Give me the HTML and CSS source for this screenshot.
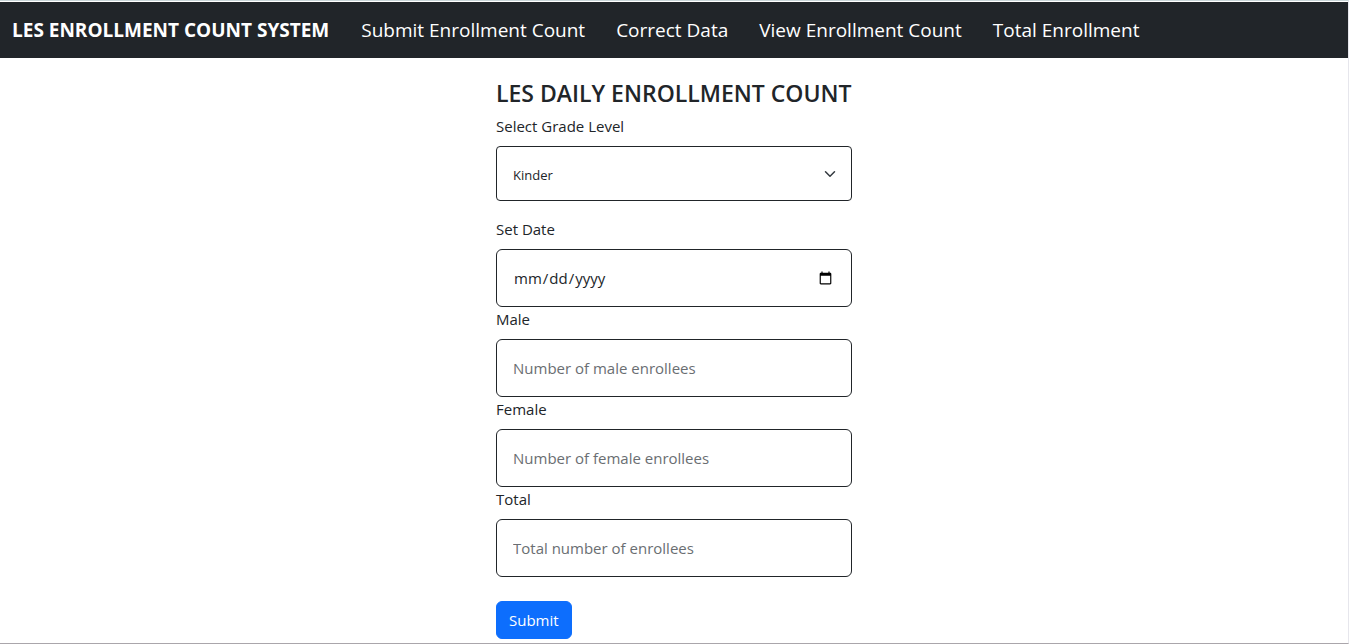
FILE: index.html
```html
<!DOCTYPE html>
<html lang="en">
<head>
  <meta charset="utf-8">
  <meta name="viewport" content="width=device-width, initial-scale=1">
  <title>LES Enrollment Count System</title>
  <link rel="stylesheet" href="styles.css">
</head>
<body class="page">
  <nav class="navbar">
    <a class="brand" href="#">LES ENROLLMENT COUNT SYSTEM</a>
    <div class="nav-links">
      <a class="nav-link" href="#">Submit Enrollment Count</a>
      <a class="nav-link" href="#">Correct Data</a>
      <a class="nav-link" href="#">View Enrollment Count</a>
      <a class="nav-link" href="#">Total Enrollment</a>
    </div>
  </nav>
  <main class="content">
    <form class="form">
      <h1 class="title">LES DAILY ENROLLMENT COUNT</h1>
      <div class="field field-spaced">
        <label class="label" for="grade">Select Grade Level</label>
        <div class="select-wrap">
          <select class="control select" id="grade">
            <option>Kinder</option>
            <option>Grade 1</option>
            <option>Grade 2</option>
            <option>Grade 3</option>
            <option>Grade 4</option>
            <option>Grade 5</option>
            <option>Grade 6</option>
          </select>
          <svg class="chevron" viewBox="0 0 16 16" aria-hidden="true"><path d="m2 5 6 6 6-6"/></svg>
        </div>
      </div>
      <div class="field">
        <label class="label" for="date">Set Date</label>
        <input class="control" id="date" type="date">
      </div>
      <div class="field">
        <label class="label" for="male">Male</label>
        <input class="control" id="male" type="text" placeholder="Number of male enrollees">
      </div>
      <div class="field">
        <label class="label" for="female">Female</label>
        <input class="control" id="female" type="text" placeholder="Number of female enrollees">
      </div>
      <div class="field">
        <label class="label" for="total">Total</label>
        <input class="control" id="total" type="text" placeholder="Total number of enrollees">
      </div>
      <button class="submit" type="submit">Submit</button>
    </form>
  </main>
</body>
</html>
```
FILE: styles.css
```css
*,
*::before,
*::after {
  box-sizing: border-box;
}

.page {
  margin: 0;
  min-height: 100vh;
  padding-top: 1px;
  border-top: 1px solid #c9d6d8;
  border-right: 1px solid #e6e6ec;
  border-bottom: 1px solid #aaa6ab;
  background: #fff;
  color: #212529;
  font-family: "Segoe UI", "Open Sans", "Noto Sans", sans-serif;
  font-size: 15px;
  line-height: 24px;
}

.navbar {
  display: flex;
  flex-wrap: wrap;
  align-items: center;
  gap: 32px;
  min-height: 56px;
  padding: 8px 12px;
  background: #212529;
}

.brand,
.nav-link {
  color: #fff;
  font-size: 19px;
  line-height: 30px;
  text-decoration: none;
}

.brand {
  font-weight: 700;
}

.nav-links {
  display: flex;
  flex-wrap: wrap;
  gap: 31px;
}

.content {
  display: flex;
  justify-content: center;
  padding-top: 20px;
}

.form {
  width: 356px;
  max-width: 100%;
}

.title {
  margin: 0 0 6px;
  font-size: 23px;
  font-weight: 600;
  line-height: 30px;
  white-space: nowrap;
}

.field-spaced {
  margin-bottom: 16px;
}

.label {
  display: block;
  margin-bottom: 8px;
}

.control {
  display: block;
  width: 100%;
  height: 58px;
  padding: 16px;
  border: 1px solid #212529;
  border-radius: 6px;
  background: #fff;
  color: #212529;
  font: inherit;
}

.control::placeholder {
  color: #6a6e72;
  opacity: 1;
}

.select-wrap {
  display: grid;
  align-items: center;
}

.select {
  grid-area: 1 / 1;
  height: 55px;
  border-radius: 4px;
  font-size: 13px;
  appearance: none;
}

.chevron {
  grid-area: 1 / 1;
  justify-self: end;
  width: 12px;
  height: 12px;
  margin-right: 16px;
  fill: none;
  stroke: #343a40;
  stroke-width: 2;
  stroke-linecap: round;
  stroke-linejoin: round;
  pointer-events: none;
}

.submit {
  height: 38px;
  margin-top: 24px;
  padding: 0 12px;
  border: 1px solid #0d6efd;
  border-radius: 6px;
  background: #0d6efd;
  color: #fff;
  font: inherit;
}
```
